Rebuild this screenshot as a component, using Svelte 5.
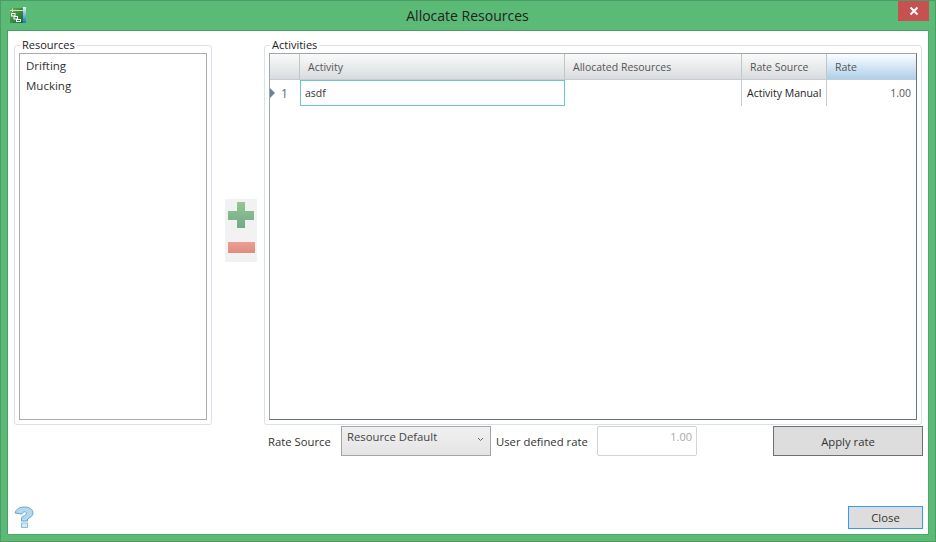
<script>
	const columns = [
		{ name: 'Activity', width: 265 },
		{ name: 'Allocated Resources', width: 177 },
		{ name: 'Rate Source', width: 85 },
		{ name: 'Rate', width: 89 }
	];
	const resources = ['Drifting', 'Mucking'];
</script>

<div class="window">
	<header class="titlebar">
		<svg class="app-icon" width="16" height="16" viewBox="0 0 16 16">
			<defs>
				<linearGradient id="ig" x1="0" y1="0" x2="1" y2="1">
					<stop offset="0" stop-color="#6fae5a" />
					<stop offset="1" stop-color="#0c6a2c" />
				</linearGradient>
				<linearGradient id="ib" x1="0" y1="0" x2="0" y2="1">
					<stop offset="0" stop-color="#e6f3fb" />
					<stop offset="1" stop-color="#1d76b8" />
				</linearGradient>
			</defs>
			<rect x="0" y="1" width="13" height="15" fill="url(#ig)" />
			<rect x="13" y="0" width="3" height="16" fill="url(#ib)" />
			<path d="M0 3.5H13" stroke="#cfe3b8" stroke-width="1" />
			<path d="M2.5 1.5V5" stroke="#cfe3b8" stroke-width="1" />
			<g fill="none" stroke="#fff" stroke-width="1">
				<rect x="1.5" y="6.5" width="3.5" height="2.5" />
				<rect x="4" y="9.5" width="3.5" height="2.5" />
				<rect x="6.5" y="12.5" width="4" height="2" />
			</g>
		</svg>
		<h1>Allocate Resources</h1>
		<button class="close-x" aria-label="Close window">
			<svg width="10" height="10" viewBox="0 0 10 10">
				<path d="M1.5 1.5L8.5 8.5M8.5 1.5L1.5 8.5" stroke="#fff" stroke-width="2" />
			</svg>
		</button>
	</header>

	<main class="content">
		<div class="panels">
			<fieldset class="group resources">
				<legend>Resources</legend>
				<ul class="listbox">
					{#each resources as r}
						<li>{r}</li>
					{/each}
				</ul>
			</fieldset>

			<div class="mover-col">
				<div class="mover">
					<svg width="28" height="28" viewBox="0 0 28 28">
						<defs>
							<linearGradient id="pg" x1="0" y1="0" x2="0" y2="1">
								<stop offset="0" stop-color="#94c793" />
								<stop offset="1" stop-color="#74a88a" />
							</linearGradient>
						</defs>
						<path d="M10 1H18V10H27V19H18V27H10V19H1V10H10Z" fill="url(#pg)" />
					</svg>
					<div class="minus"></div>
				</div>
			</div>

			<div class="right">
				<fieldset class="group activities">
					<legend>Activities</legend>
					<div class="grid">
						<div class="thead">
							<div class="corner"></div>
							{#each columns as c}
								<div class="th" class:hot={c.name === 'Rate'} style="width: {c.width}px">{c.name}</div>
							{/each}
						</div>
						<div class="row">
							<div class="row-head">
								<span class="arrow"></span>
								<span class="num">1</span>
							</div>
							<div class="td active" style="width: {columns[0].width}px">asdf</div>
							<div class="td" style="width: {columns[1].width}px"></div>
							<div class="td source" style="width: {columns[2].width}px">Activity Manual</div>
							<div class="td rate" style="width: {columns[3].width}px">1.00</div>
						</div>
					</div>
				</fieldset>

				<div class="rate-bar">
					<span class="lbl first">Rate Source</span>
					<div class="combo">
						<span>Resource Default</span>
						<svg width="7" height="5" viewBox="0 0 7 5">
							<path d="M1 1L3.5 3.5L6 1" fill="none" stroke="#666" stroke-width="1" />
						</svg>
					</div>
					<span class="lbl second">User defined rate</span>
					<div class="rate-input">1.00</div>
					<button class="btn apply">Apply rate</button>
				</div>
			</div>
		</div>

		<footer class="bottom">
			<svg class="help" width="20" height="22" viewBox="0 0 20 22">
				<path
					d="M1 7C2 3 6 1 10 1C15 1 19 3 19 7C19 10 16 11.5 13.5 13V15H7.5V11.5C9 10 12.5 9.5 12.5 7C12.5 5.5 9 5 8 8Z"
					fill="#b5d9ec"
					stroke="#5aaad3"
					stroke-width="1"
				/>
				<rect x="7.5" y="17" width="6" height="4.5" fill="#d4e8f3" stroke="#8cc0dc" />
			</svg>
			<button class="btn close">Close</button>
		</footer>
	</main>
</div>

<style>
	:global(body) {
		margin: 0;
	}
	.window {
		width: 936px;
		height: 542px;
		box-sizing: border-box;
		background: #5aba76;
		border: 1px solid #4c9c68;
		padding: 0 7px 7px 6px;
		display: flex;
		flex-direction: column;
		font-family: 'Open Sans', 'Noto Sans', sans-serif;
		font-size: 11px;
		color: #333;
	}
	.titlebar {
		height: 29px;
		flex: none;
		display: flex;
		align-items: flex-start;
		position: relative;
	}
	.app-icon {
		margin: 6px 0 0 3px;
	}
	h1 {
		position: absolute;
		left: 0;
		right: 0;
		top: 6px;
		margin: 0;
		text-align: center;
		font-size: 14px;
		line-height: 18px;
		font-weight: 400;
		color: #222;
	}
	.close-x {
		position: absolute;
		right: -1px;
		top: 0;
		width: 31px;
		height: 20px;
		padding: 0;
		border: none;
		background: #c75050;
		display: flex;
		align-items: center;
		justify-content: center;
	}
	.content {
		flex: 1;
		background: #fff;
		border: 1px solid #4c9c68;
		border-width: 1px 0 0 1px;
		padding: 0 5px 0 6px;
		display: flex;
		flex-direction: column;
		min-height: 0;
		box-shadow: 1px 1px 0 #4fa56c;
	}
	.panels {
		flex: 1;
		display: flex;
		margin-top: 7px;
		min-height: 0;
	}
	.group {
		box-sizing: border-box;
		margin: 0;
		padding: 0 4px 4px;
		border: 1px solid #d9e2e8;
		border-radius: 3px;
		min-width: 0;
	}
	legend {
		padding: 0 2px;
		margin-left: 1px;
		font-size: 11px;
		line-height: 14px;
		color: #222;
	}
	.resources {
		width: 198px;
		height: 387px;
		flex: none;
	}
	.listbox {
		list-style: none;
		box-sizing: border-box;
		height: 367px;
		margin: 1px 0 0;
		padding: 2px 0 0 6px;
		border: 1px solid #a9abb0;
	}
	.listbox li {
		height: 20px;
		line-height: 20px;
		font-size: 11.5px;
	}
	.mover-col {
		width: 52px;
		flex: none;
		padding: 161px 0 0 13px;
		box-sizing: border-box;
	}
	.mover {
		width: 32px;
		height: 63px;
		background: #f2f2f2;
		display: flex;
		flex-direction: column;
		align-items: center;
		padding-top: 2px;
		box-sizing: border-box;
	}
	.minus {
		width: 27px;
		height: 11px;
		margin-top: 13px;
		background: linear-gradient(#eb9f97, #e08c80);
	}
	.right {
		flex: none;
		width: 659px;
		display: flex;
		flex-direction: column;
	}
	.activities {
		width: 658px;
		height: 387px;
		flex: none;
	}
	.grid {
		box-sizing: border-box;
		height: 367px;
		margin-top: 1px;
		border: 1px solid #a0a5aa;
		border-bottom-color: #6b7278;
		border-right-color: #6b7278;
	}
	.thead {
		display: flex;
		box-sizing: border-box;
		height: 26px;
		background: linear-gradient(#fafafa, #d9dcdf);
		border-bottom: 1px solid #c8ccd0;
	}
	.corner {
		width: 30px;
		flex: none;
		border-right: 1px solid #c3c6c9;
		box-sizing: border-box;
	}
	.th {
		box-sizing: border-box;
		flex: none;
		padding: 0 0 0 8px;
		line-height: 26px;
		font-size: 10.5px;
		color: #555;
		border-right: 1px solid #c3c6c9;
	}
	.th.hot {
		background: linear-gradient(#fbfdff, #aed0ea);
		border-right: none;
	}
	.row {
		display: flex;
		height: 26px;
	}
	.row-head {
		width: 30px;
		flex: none;
		position: relative;
	}
	.arrow {
		position: absolute;
		left: 0;
		top: 8px;
		border-left: 5px solid #6b8299;
		border-top: 5px solid transparent;
		border-bottom: 5px solid transparent;
	}
	.num {
		position: absolute;
		left: 11px;
		top: 6px;
		font-size: 12px;
		line-height: 16px;
		color: #5a6a7a;
	}
	.td {
		box-sizing: border-box;
		flex: none;
		line-height: 27px;
		font-size: 10.5px;
		border-right: 1px solid #c8ccd0;
		color: #333;
		white-space: nowrap;
		overflow: hidden;
	}
	.td.active {
		border: 1px solid #6cc3d1;
		padding-left: 4px;
		line-height: 24px;
	}
	.td.source {
		padding-left: 5px;
		color: #222;
	}
	.td.rate {
		text-align: right;
		padding-right: 5px;
		border-right: none;
		color: #555;
	}
	.rate-bar {
		display: flex;
		align-items: center;
		height: 30px;
		margin-top: 1px;
		padding-left: 4px;
	}
	.lbl {
		font-size: 11.3px;
		color: #333;
		flex: none;
	}
	.lbl.first {
		width: 73px;
	}
	.combo {
		box-sizing: border-box;
		flex: none;
		width: 150px;
		height: 30px;
		border: 1px solid #a6a6a6;
		background: linear-gradient(#f0f0f0, #e4e4e4);
		display: flex;
		justify-content: space-between;
		padding: 2px 6px 0 5px;
		font-size: 11.3px;
		line-height: 16px;
		color: #444;
	}
	.combo svg {
		margin-top: 8px;
	}
	.lbl.second {
		margin-left: 5px;
		width: 101px;
	}
	.rate-input {
		box-sizing: border-box;
		flex: none;
		width: 100px;
		height: 30px;
		border: 1px solid #d0d4d8;
		border-radius: 2px;
		text-align: right;
		padding: 2px 4px 0 0;
		font-size: 11px;
		line-height: 16px;
		color: #aaa;
	}
	.btn {
		box-sizing: border-box;
		font-family: inherit;
		font-size: 11.3px;
		color: #333;
		background: #dddddd;
		padding: 0;
	}
	.apply {
		width: 150px;
		height: 30px;
		margin-left: 76px;
		border: 1px solid #707070;
	}
	.bottom {
		flex: none;
		height: 37px;
		display: flex;
		justify-content: space-between;
		align-items: flex-start;
	}
	.help {
		margin-top: 9px;
	}
	.close {
		width: 75px;
		height: 23px;
		margin-top: 9px;
		border: 1px solid #3399ff;
	}
</style>
